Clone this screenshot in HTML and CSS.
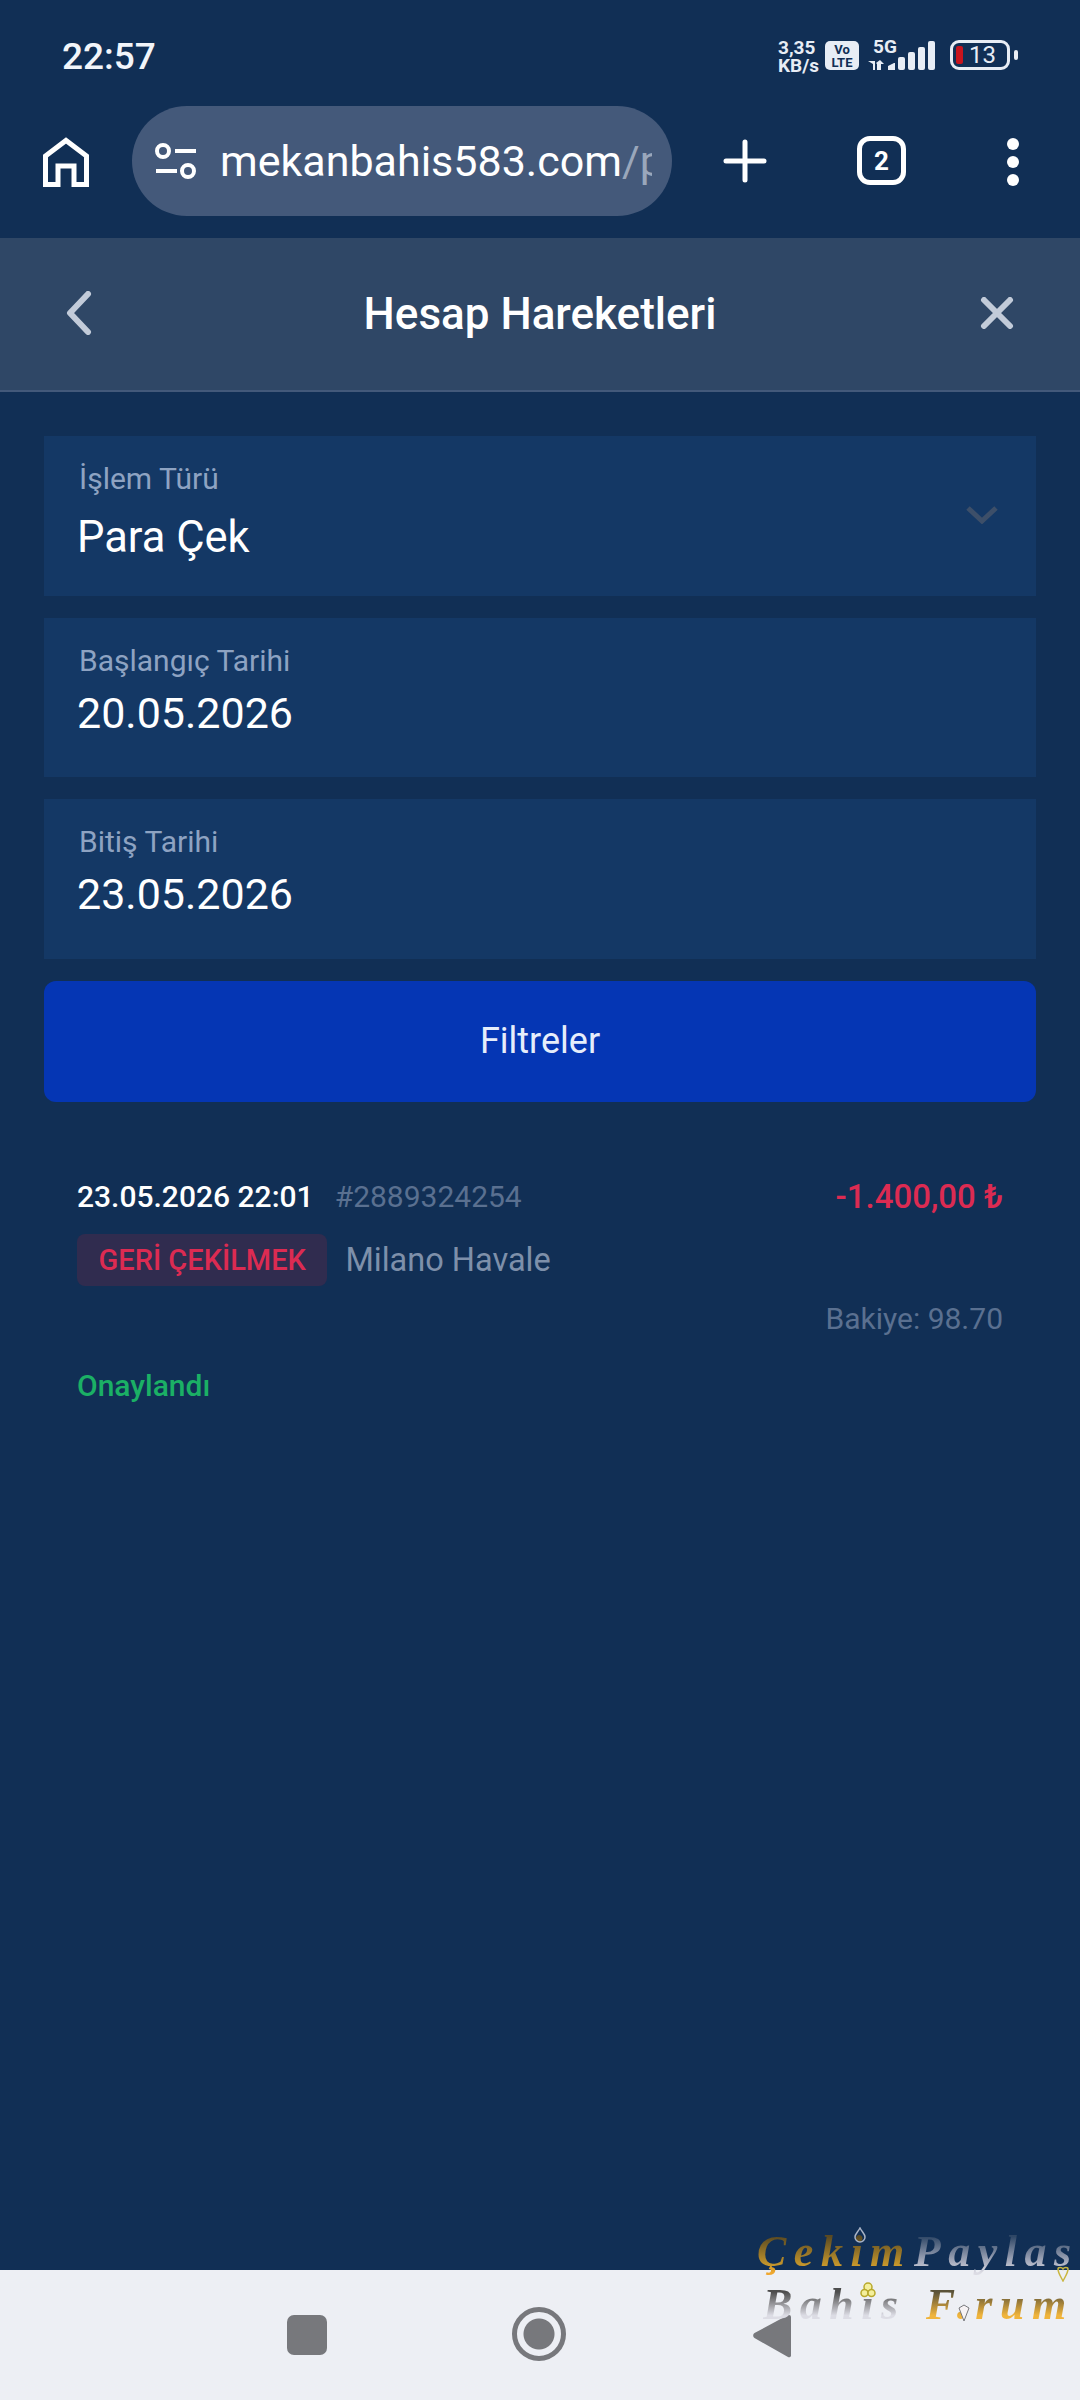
FILE: index.html
```html
<!DOCTYPE html>
<html lang="tr">
<head>
    <meta charset="UTF-8">
    <meta name="viewport" content="width=device-width, initial-scale=1.0">
    <title>Hesap Hareketleri</title>
    <link rel="stylesheet" href="styles.css">
</head>
<body>
    <div class="screen">
        <div class="status-bar">
            <span class="time">22:57</span>
            <div class="status-icons">
                <span class="speed">3,35<br>KB/s</span>
                <span class="volte">Vo<br>LTE</span>
                <div class="signal">
                    <span class="five-g">5G</span>
                    <svg class="signal-bars" width="68" height="30" viewBox="0 0 68 30" fill="#e8edf5">
                        <path d="M0 21h7v9h-2v-6zM9 30v-6l-1-1 4-3 4 4h-3v6z"/>
                        <path d="M20 30v-4l6-3h1v7z"/>
                        <rect x="30" y="17" width="7" height="13" rx="2"/>
                        <rect x="40" y="12" width="7" height="18" rx="2"/>
                        <rect x="50" y="7" width="7" height="23" rx="2"/>
                        <rect x="60" y="1" width="7" height="29" rx="2"/>
                    </svg>
                </div>
                <div class="battery">
                    <div class="battery-body"><i class="battery-level"></i><span>13</span></div>
                    <i class="battery-tip"></i>
                </div>
            </div>
        </div>

        <div class="browser-bar">
            <svg class="home-icon" width="46" height="50" viewBox="0 0 46 50" fill="none" stroke="#fff" stroke-width="5">
                <path d="M2.500 47.500V19L23 3.500 43.500 19V47.500H31V29H15V47.500Z"/>
            </svg>
            <div class="url-pill">
                <svg width="42" height="38" viewBox="0 0 42 38" fill="none" stroke="#fff" stroke-width="4">
                    <circle cx="8" cy="9" r="6"/>
                    <path d="M20 9h21M1 29h21"/>
                    <circle cx="33" cy="29" r="6"/>
                </svg>
                <span class="url-text">mekanbahis583.com<span class="url-path">/p</span></span>
            </div>
            <svg class="plus-icon" width="44" height="44" viewBox="0 0 44 44" stroke="#fff" stroke-width="5" stroke-linecap="round">
                <path d="M22 3v38M3 22h38"/>
            </svg>
            <span class="tab-count">2</span>
            <div class="more-dots"><i></i><i></i><i></i></div>
        </div>

        <header class="page-header">
            <svg class="header-back" width="26" height="44" viewBox="0 0 26 44" fill="none" stroke="#c2cbd9" stroke-width="6" stroke-linecap="round" stroke-linejoin="round">
                <path d="M22 3 4 22l18 19"/>
            </svg>
            <h1>Hesap Hareketleri</h1>
            <svg class="header-close" width="34" height="32" viewBox="0 0 34 32" fill="none" stroke="#c2cbd9" stroke-width="6" stroke-linecap="round">
                <path d="M4 3l26 26M30 3 4 29"/>
            </svg>
        </header>

        <main class="content">
            <div class="field">
                <label class="field-label">İşlem Türü</label>
                <div class="field-value field-value-select">Para Çek</div>
                <svg class="field-arrow" width="32" height="18" viewBox="0 0 32 18" fill="none" stroke="#3d4f69" stroke-width="5">
                    <path d="M2 2l14 13L30 2"/>
                </svg>
            </div>
            <div class="field">
                <label class="field-label">Başlangıç Tarihi</label>
                <div class="field-value">20.05.2026</div>
            </div>
            <div class="field">
                <label class="field-label">Bitiş Tarihi</label>
                <div class="field-value">23.05.2026</div>
            </div>
            <button class="filter-btn">Filtreler</button>

            <div class="transaction">
                <div class="tx-row">
                    <div class="tx-meta">
                        <span class="tx-date">23.05.2026 22:01</span>
                        <span class="tx-id">#2889324254</span>
                    </div>
                    <span class="tx-amount">-1.400,00 ₺</span>
                </div>
                <div class="tx-type">
                    <span class="tx-tag">GERİ ÇEKİLMEK</span>
                    <span class="tx-method">Milano Havale</span>
                </div>
                <div class="tx-balance">Bakiye: 98.70</div>
                <div class="tx-status">Onaylandı</div>
            </div>
        </main>

        <nav class="nav-bar">
            <i class="nav-square"></i>
            <i class="nav-circle"></i>
            <svg width="38" height="44" viewBox="0 0 38 44" fill="#77787c">
                <path d="M36 1a2 2 0 0 1 2 2v38a2 2 0 0 1-3 2L1.500 24a3 3 0 0 1 0-5L35 1z"/>
            </svg>
        </nav>

        <div class="watermark">
            <div class="wm-line wm-top"><span class="wm-gold">Çekim</span><span class="wm-silver">Paylas</span></div>
            <div class="wm-line wm-bottom"><span class="wm-silver-light">Bahis</span><span class="wm-gold-light">F.rum</span></div>
            <svg class="wm-mark wm-mark-spade" width="14" height="16" viewBox="0 0 14 16" fill="none" stroke="#aab4c6" stroke-width="1.500"><path d="M7 1C5 5 2 7 2 10a5 5 0 0 0 10 0c0-3-3-5-5-9z"/></svg>
            <svg class="wm-mark wm-mark-heart" width="12" height="16" viewBox="0 0 12 16" fill="none" stroke="#c9b640" stroke-width="1.500"><path d="M6 15C4 11 1 7 1 3c0-2 4-2 5 0 1-2 5-2 5 0 0 4-3 8-5 12z"/></svg>
            <svg class="wm-mark wm-mark-club" width="16" height="18" viewBox="0 0 16 18" fill="#f4ef9c" stroke="#b8a92c" stroke-width="1.500"><circle cx="8" cy="5" r="4"/><circle cx="4.500" cy="11" r="3.500"/><circle cx="11.500" cy="11" r="3.500"/></svg>
            <svg class="wm-mark wm-mark-drop" width="12" height="18" viewBox="0 0 12 18" fill="#f6f2f4" stroke="#77787c" stroke-width="1"><path d="M1 4l5-3 5 3-5 13z"/></svg>
        </div>
    </div>
</body>
</html>
```

FILE: styles.css
```css
* { box-sizing: border-box; }
body { margin: 0; background-color: #112f55; font-family: Roboto, "Noto Sans", sans-serif; color: #fff; }
.screen { position: relative; width: 1080px; height: 2400px; display: flex; flex-direction: column; overflow: hidden; background-color: #112f55; }

/* status bar */
.status-bar { height: 106px; padding: 36px 62px 0 62px; display: flex; justify-content: space-between; align-items: flex-start; }
.time { font-size: 37px; font-weight: 500; line-height: 42px; color: #f2f5fa; }
.status-icons { display: flex; align-items: flex-start; color: #e8edf5; }
.speed { width: 40px; font-size: 19px; font-weight: 700; line-height: 18px; margin: 3px 7px 0 0; white-space: nowrap; }
.volte { width: 34px; height: 29px; margin-top: 5px; background-color: #e8edf5; color: #112f55; border-radius: 5px; font-size: 13px; font-weight: 700; line-height: 13px; text-align: center; padding-top: 2px; }
.signal { position: relative; width: 68px; height: 30px; margin: 4px 0 0 9px; }
.five-g { position: absolute; left: 5px; top: -2px; font-size: 19px; font-weight: 700; line-height: 18px; }
.signal-bars { display: block; }
.battery { display: flex; align-items: center; margin: 4px 0 0 14px; }
.battery-body { width: 60px; height: 30px; border: 3px solid #e8edf5; border-radius: 9px; display: flex; align-items: center; padding-left: 3px; font-size: 24px; line-height: 24px; }
.battery-level { width: 7px; height: 18px; margin-right: 6px; background-color: #c8141e; border-radius: 2px; }
.battery-tip { width: 4px; height: 10px; margin-left: 4px; background-color: #e8edf5; border-radius: 2px; }

/* browser toolbar */
.browser-bar { height: 132px; display: flex; align-items: flex-start; }
.home-icon { margin: 31px 0 0 43px; }
.url-pill { width: 540px; height: 110px; margin-left: 43px; padding: 0 20px 0 23px; background-color: #44597a; border-radius: 55px; display: flex; align-items: center; overflow: hidden; }
.url-text { margin-left: 23px; font-size: 43px; line-height: 50px; white-space: nowrap; overflow: hidden; flex: 1; }
.url-path { color: #9aa7bb; }
.plus-icon { margin: 33px 0 0 51px; }
.tab-count { width: 49px; height: 49px; margin: 30px 0 0 90px; border: 5px solid #fff; border-radius: 13px; display: flex; align-items: center; justify-content: center; font-size: 26px; font-weight: 700; }
.more-dots { margin: 32px 0 0 101px; display: flex; flex-direction: column; gap: 6px; }
.more-dots i { display: block; width: 12px; height: 12px; border-radius: 50%; background-color: #fff; }

/* page header */
.page-header { height: 154px; padding: 0 66px; background-color: #2f4766; border-bottom: 2px solid #43597a; display: grid; grid-template-columns: 1fr auto 1fr; align-items: center; }
.page-header h1 { margin: 0; font-size: 44px; font-weight: 500; line-height: 50px; }
.header-back { margin-bottom: 2px; }
.header-close { justify-self: end; margin-bottom: 2px; }

/* filter form */
.content { flex: 1; padding: 44px 44px 0; display: flex; flex-direction: column; }
.field { position: relative; height: 159.670px; margin-bottom: 22px; padding: 25px 33px 0; background-color: #143865; }
.field-label { display: block; font-size: 30px; line-height: 36px; color: #8ea3c2; padding-left: 2px; }
.field-value { font-size: 43px; line-height: 50px; margin-top: 9px; }
.field-value-select { margin-top: 16px; font-size: 43.500px; }
.field-arrow { position: absolute; right: 38px; top: 70px; }
.filter-btn { height: 121px; flex-shrink: 0; border: none; border-radius: 12px; background-color: #0536b4; color: #e6edfb; font-family: inherit; font-size: 36px; font-weight: 400; cursor: pointer; }

/* transaction */
.transaction { padding: 75px 33px 0; }
.tx-row { display: flex; justify-content: space-between; align-items: center; height: 40px; }
.tx-meta { display: flex; align-items: center; gap: 21px; }
.tx-date { font-size: 30px; font-weight: 500; }
.tx-id { font-size: 30px; color: #5a7090; }
.tx-amount { font-size: 33px; font-weight: 500; color: #dc2b52; }
.tx-type { display: flex; align-items: center; gap: 18px; margin-top: 17px; }
.tx-tag { height: 52px; padding: 0 21.500px; border-radius: 8px; background-color: #302c4f; color: #dc2b52; font-size: 29px; font-weight: 500; line-height: 52px; }
.tx-method { font-size: 32.500px; color: #7e90aa; }
.tx-balance { margin-top: 13px; text-align: right; font-size: 30px; line-height: 40px; color: #5a7090; }
.tx-status { margin-top: 27px; font-size: 30px; font-weight: 500; line-height: 40px; color: #1bb065; }

/* android nav */
.nav-bar { height: 130px; background-color: #edeff4; display: flex; align-items: flex-start; padding: 44px 0 0 287px; }
.nav-square { width: 40px; height: 40px; margin-top: 1px; background-color: #77787c; border-radius: 7px; }
.nav-circle { width: 54px; height: 54px; margin: -7px 0 0 185px; border: 5px solid #77787c; border-radius: 50%; background: radial-gradient(circle, #77787c 0 15px, transparent 16px); }
.nav-bar svg { margin-left: 187px; }

/* forum watermark over the page */
.watermark { position: absolute; left: 757px; top: 2226px; width: 323px; height: 110px; font-family: "Liberation Serif", serif; font-style: italic; font-weight: 700; }
.wm-line { display: flex; white-space: nowrap; }
.wm-line span { -webkit-background-clip: text; background-clip: text; color: transparent; }
.wm-top { font-size: 44px; line-height: 52px; letter-spacing: 7.500px; }
.wm-bottom { font-size: 44px; line-height: 52px; letter-spacing: 7.500px; margin: 1px 0 0 6px; }
.wm-gold { background-image: linear-gradient(#5a4a22 20%, #c5962c 75%, #f0a830 90%); }
.wm-silver { margin-left: 2px; background-image: linear-gradient(#2f4766 20%, #a9aebf 70%, #dcdce4 90%); }
.wm-silver-light { background-image: linear-gradient(#4d4d4d 25%, #dcdce4 70%); }
.wm-gold-light { margin-left: 20px; background-image: linear-gradient(#5a5238 25%, #f0b43c 70%); }
.wm-mark { position: absolute; }
.wm-mark-spade { left: 96px; top: 1px; }
.wm-mark-heart { left: 300px; top: 40px; }
.wm-mark-club { left: 103px; top: 56px; }
.wm-mark-drop { left: 201px; top: 78px; }
```
